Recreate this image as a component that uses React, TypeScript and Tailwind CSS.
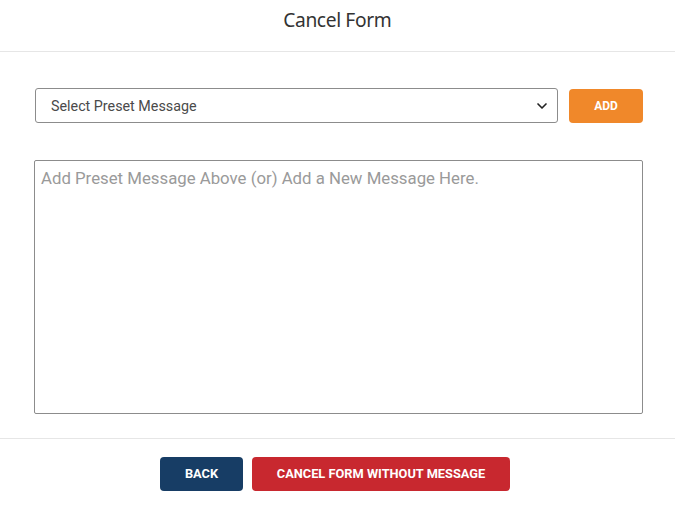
import React, { useState } from 'react';
import { ChevronDown } from 'lucide-react';

const presets = ['Customer request', 'Duplicate form', 'Entered in error'];

export default function App() {
  const [preset, setPreset] = useState('');
  const [message, setMessage] = useState('');

  const addPreset = () => {
    if (!preset) return;
    setMessage(prev => (prev ? prev + '\n' + preset : preset));
  };

  return (
    <div className="w-[675px] h-[508px] bg-white flex flex-col font-['Roboto',sans-serif]">
      {/* Header */}
      <div className="h-[52px] border-b border-[#e6e6e6] flex justify-center pt-[7px]">
        <h2 className="text-[20px] leading-[26px] text-[#333] font-['Noto_Sans',sans-serif] tracking-[-0.4px] scale-x-[0.96]">
          Cancel Form
        </h2>
      </div>

      {/* Body */}
      <div className="pl-[34px] pr-[32px] pt-[36px] pb-[24px] border-b border-[#e6e6e6]">
        <div className="flex items-center gap-[11px]">
          <div className="relative flex-1 ml-[1px]">
            <select
              value={preset}
              onChange={e => setPreset(e.target.value)}
              className="appearance-none w-full h-[35px] rounded-[3px] border border-[#8c8c8c] bg-white pl-[15px] pr-8 pt-[2px] text-[14.3px] text-[#4a4a4a] outline-none"
            >
              <option value="">Select Preset Message</option>
              {presets.map(p => (
                <option key={p} value={p}>{p}</option>
              ))}
            </select>
            <ChevronDown
              className="absolute right-[8px] top-1/2 -translate-y-1/2 w-[16px] h-[16px] text-[#222] pointer-events-none"
              strokeWidth={2.5}
            />
          </div>
          <button
            onClick={addPreset}
            className="w-[74px] h-[34px] rounded-[4px] bg-[#f0882a] text-white text-[12px] font-bold"
          >
            ADD
          </button>
        </div>

        <textarea
          value={message}
          onChange={e => setMessage(e.target.value)}
          placeholder="Add Preset Message Above (or) Add a New Message Here."
          className="mt-[37px] block w-full h-[254px] resize-none rounded-[2px] border border-[#8c8c8c] px-[6px] pt-[5px] pb-[6px] text-[16.8px] text-[#333] placeholder:text-[#9a9a9a] outline-none"
        />
      </div>

      {/* Footer */}
      <div className="flex justify-center gap-[9px] pt-[18px] pr-[5px]">
        <button className="w-[83px] h-[34px] rounded-[4px] bg-[#173d65] text-white text-[12.8px] font-bold">
          BACK
        </button>
        <button className="w-[258px] h-[34px] rounded-[4px] bg-[#c8282f] text-white text-[12.8px] font-bold">
          CANCEL FORM WITHOUT MESSAGE
        </button>
      </div>
    </div>
  );
}
